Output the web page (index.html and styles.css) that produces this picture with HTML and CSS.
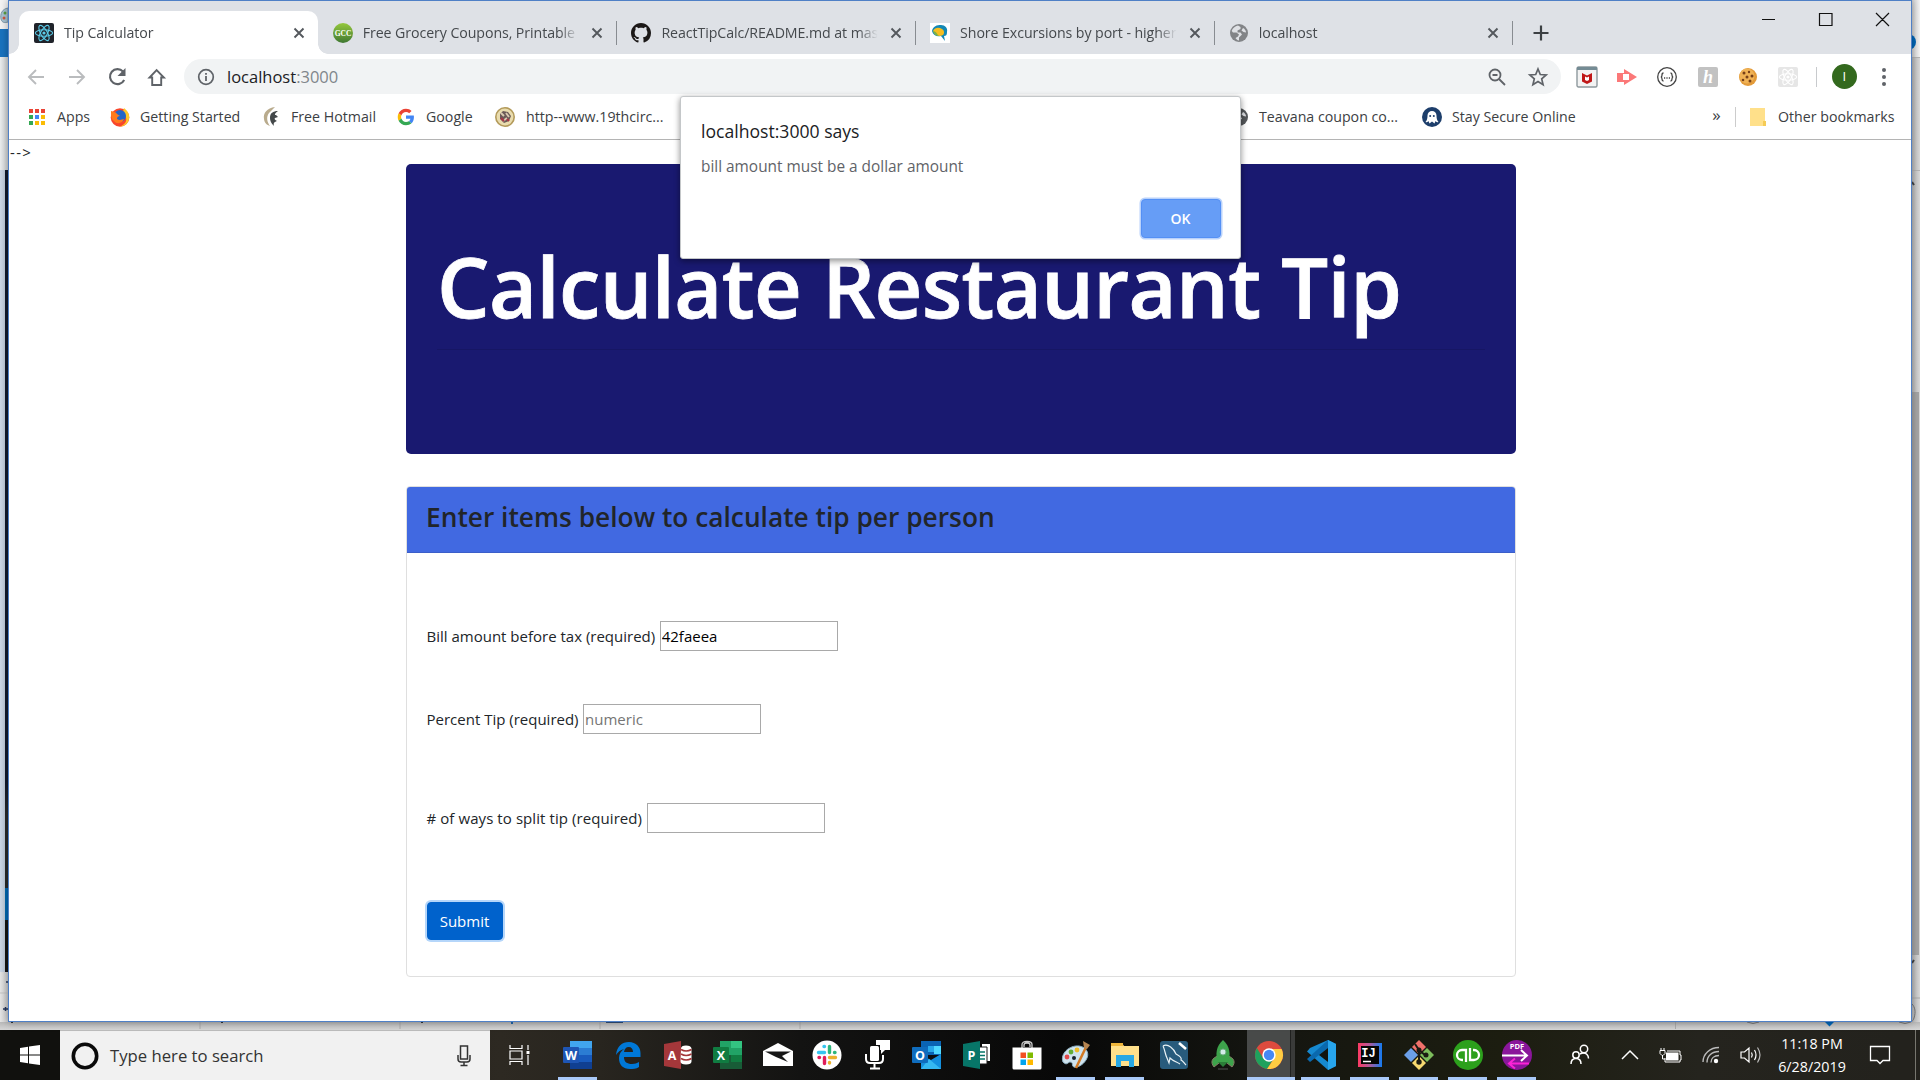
FILE: index.html
```html
<!DOCTYPE html>
<html lang="en">
<head>
<meta charset="utf-8">
<title>Tip Calculator</title>
<link rel="stylesheet" href="styles.css">
</head>
<body>
<svg class="defs" width="0" height="0">
  <symbol id="x" viewBox="0 0 12 12"><path d="M1.500 1.500l9 9M10.500 1.500l-9 9" stroke="#54585d" stroke-width="1.900" fill="none"/></symbol>
  <symbol id="atom" viewBox="0 0 20 20"><g fill="none" stroke="currentColor" stroke-width="1.100"><ellipse cx="10" cy="10" rx="8.600" ry="3.300"/><ellipse cx="10" cy="10" rx="8.600" ry="3.300" transform="rotate(60 10 10)"/><ellipse cx="10" cy="10" rx="8.600" ry="3.300" transform="rotate(120 10 10)"/></g><circle cx="10" cy="10" r="1.600" fill="currentColor"/></symbol>
  <symbol id="globe" viewBox="0 0 20 20"><circle cx="10" cy="10" r="9" fill="currentColor"/><path d="M9 2.500c-3 .6-5.500 2.600-6.300 5.500L4 9.500h3.500l2.500 2-1 2-2.500 1.500c.5 1.200 1.700 2.200 3.500 2.500v-3l3-3-1.500-2H8.500V7.500l3-1.500V4zM14 5l-1.500 2.500 2 1.500 2.500.5C17 7.500 15.800 6 14 5z" fill="#dfe1e5"/></symbol>
</svg>

<div class="desktop">
  <div class="backdrop">
    <div class="edge edge-left">
      <svg class="paint-corner" width="8" height="29" viewBox="0 0 8 29"><path d="M8 8C2 9 0 14 1 19c1 4 4 4 7 3z" fill="#a9c5d4" stroke="#7d97a8"/><circle cx="5" cy="13" r="1.500" fill="#5c9f42"/><circle cx="4" cy="18" r="1.500" fill="#cf5842"/></svg>
      <div class="ribbon"></div>
      <div class="upper"></div>
      <div class="code"><div class="code-dark"></div><div class="code-blue"></div><div class="code-black"></div></div>
      <div class="lower"><svg width="8" height="50" viewBox="0 0 8 50"><path d="M0 21h8" stroke="#c3c3c3"/><path d="M6 10h2M3 37h5M5.500 35v4" stroke="#25365b" stroke-width="1.500"/></svg></div>
    </div>
    <div class="edge edge-right">
      <svg class="user-dot" width="8" height="57" viewBox="0 0 8 57"><circle cx="-4" cy="42" r="8" fill="#0067b8"/></svg>
      <div class="side-top"></div>
      <div class="side-track"><svg width="8" height="20" viewBox="0 0 8 20"><path d="M0 11l2 3" stroke="#444" stroke-width="2"/></svg></div>
      <div class="thumb"></div>
      <svg width="8" height="67" viewBox="0 0 8 67"><path d="M2 5l-2 3" stroke="#444" stroke-width="2"/><path d="M0 43h8" stroke="#aaa"/><path d="M0 49c3 3 4 8 2 14-1 3-2 3-2 3" fill="none" stroke="#777"/></svg>
    </div>
    <svg class="edge-bottom" width="1920" height="8" viewBox="0 0 1920 8"><path d="M200 0v7M400 0v7M600 0v7M800 0v7M1675.500 0v7" stroke="#aaa"/><path d="M606 .5h17" stroke="#304e77"/><path d="M512 0v2" stroke="#2166aa" stroke-width="2"/><path d="M11 .5h2M221 .5h2M421 .5h2" stroke="#333"/><path d="M1747 0q6 3 12 0M1899 0q6 3 12 0" fill="none" stroke="#777"/><path d="M1825 0h9l-2 2-2.500 2.500L1827 2z" fill="#0067b8"/></svg>
  </div>

  <div class="window">
    <div class="tabs">
      <div class="tab active"><svg class="fav" viewBox="0 0 20 20"><rect width="20" height="20" rx="2" fill="#20232a"/><g color="#5bcbe8"><use href="#atom"/></g></svg><span class="label">Tip Calculator</span><svg class="close"><use href="#x"/></svg></div>
      <div class="tab"><svg class="fav" viewBox="0 0 20 20"><defs><linearGradient id="gc" x2="0" y2="1"><stop stop-color="#95c83d"/><stop offset="1" stop-color="#3f7832"/></linearGradient></defs><circle cx="10" cy="10" r="10" fill="url(#gc)"/><text x="10" y="12.800" font-size="7.500" text-anchor="middle" fill="#fff" class="serif">GCC</text></svg><span class="label">Free Grocery Coupons, Printable C</span><svg class="close"><use href="#x"/></svg></div>
      <div class="tab"><svg class="fav" viewBox="0 0 16 16"><path fill="#1b1817" d="M8 0C3.580 0 0 3.580 0 8c0 3.540 2.290 6.530 5.470 7.590.4.070.55-.17.55-.38 0-.19-.01-.82-.01-1.490-2.010.37-2.530-.49-2.690-.94-.09-.23-.48-.94-.82-1.130-.28-.15-.68-.52-.01-.53.63-.01 1.080.58 1.230.82.72 1.210 1.870.87 2.330.66.07-.52.28-.87.51-1.070-1.780-.2-3.640-.89-3.640-3.950 0-.87.31-1.590.82-2.150-.08-.2-.36-1.020.08-2.120 0 0 .67-.21 2.200.82.64-.18 1.320-.27 2-.27s1.360.09 2 .27c1.530-1.040 2.200-.82 2.200-.82.44 1.100.16 1.920.08 2.120.51.56.82 1.270.82 2.150 0 3.070-1.870 3.750-3.650 3.950.29.25.54.73.54 1.480 0 1.070-.01 1.930-.01 2.200 0 .21.15.46.55.38A8.010 8.010 0 0016 8c0-4.420-3.580-8-8-8z"/></svg><span class="label">ReactTipCalc/README.md at mast</span><svg class="close"><use href="#x"/></svg></div>
      <div class="tab"><svg class="fav" viewBox="0 0 20 20"><rect width="20" height="20" fill="#fff"/><path d="M2 8c1-5 5-6 9-6s7 3 6 7c0 3-1 4-3 4l1 5-4-5C6 14 3 12 2 8z" fill="#1388b5"/><path d="M3 8c2-4 6-4 9-2 2 1 3 4 1 6-4 2-8 1-10-4z" fill="#f6bd20"/><path d="M3 8c3 0 4 3 6 5-3 0-5-2-6-5z" fill="#7eb343"/></svg><span class="label">Shore Excursions by port - higher</span><svg class="close"><use href="#x"/></svg></div>
      <div class="tab"><svg class="fav grey"><use href="#globe"/></svg><span class="label">localhost</span><svg class="close"><use href="#x"/></svg></div>
      <svg class="new-tab" width="16" height="16" viewBox="0 0 16 16"><path d="M8 .5v15M.5 8h15" stroke="#3c4043" stroke-width="2.200"/></svg>
      <svg class="controls" width="128" height="16" viewBox="0 0 128 16"><g fill="none" stroke="#111" stroke-width="1.200"><path d="M1 8.500h13M58.500 2.500h12.500v12H58.500zM115 2l13 13M128 2l-13 13"/></g></svg>
    </div>

    <div class="toolbar">
      <svg class="nav" width="144" height="24" viewBox="0 0 144 24">
        <g fill="none" stroke-width="1.900"><path d="M23 12H8M15 5l-7 7 7 7" stroke="#babcbe"/><path d="M48 12h15M56 5l7 7-7 7" stroke="#babcbe"/><path d="M102 6.500A7.500 7.500 0 1 0 103.200 15" stroke="#5f6368" stroke-width="2.100"/><path d="M128.500 12.500h2.700v7.500h9v-7.500h2.700L135.600 5z" stroke="#5f6368"/></g><path d="M104.500 3v8h-8z" fill="#5f6368"/>
      </svg>
      <div class="omnibox">
        <svg width="18" height="18" viewBox="0 0 18 18"><circle cx="9" cy="9" r="7.300" fill="none" stroke="#5f6368" stroke-width="1.700"/><path d="M9 8v5M9 5v1.800" stroke="#5f6368" stroke-width="1.800"/></svg>
        <span class="url">localhost<i>:3000</i></span>
        <svg class="zoomer" width="18" height="18" viewBox="0 0 18 18"><circle cx="7" cy="7" r="5.500" fill="none" stroke="#5f6368" stroke-width="1.800"/><path d="M11 11l6 6M4.500 7h5" stroke="#5f6368" stroke-width="1.800"/></svg>
        <svg width="20" height="20" viewBox="0 0 20 20"><path d="M10 2l2.300 5.500 5.900.5-4.500 3.900 1.400 5.800-5.100-3.100-5.100 3.100 1.400-5.800L1.800 8l5.900-.5z" fill="none" stroke="#5f6368" stroke-width="1.700"/></svg>
      </div>
      <div class="extensions">
        <svg width="22" height="22" viewBox="0 0 22 22"><rect x="1" y="1" width="20" height="20" rx="1.500" fill="#f3f3f3" stroke="#8e999d" stroke-width="1.400"/><path d="M1 1h20v3H1z" fill="#748b94"/><path d="M6 7l5 2.500L16 7v8.500L11 18l-5-2.500z" fill="#c01818"/><path d="M9 10.500l2 1 2-1V14l-2 1-2-1z" fill="#fff"/></svg>
        <svg width="22" height="22" viewBox="0 0 22 22"><path d="M8 3l13 8-13 8z" fill="#fb7878"/><path d="M1 7h11v9H1z" fill="#fb7878"/><path d="M7 8h6v6H7z" fill="#fff"/></svg>
        <svg width="22" height="22" viewBox="0 0 22 22"><circle cx="11" cy="11" r="9.300" fill="#fff" stroke="#444" stroke-width="1.300"/><path d="M7.500 7Q6 7 6 9t-1.200 2Q6 11 6 13t1.500 2M14.500 7q1.500 0 1.500 2t1.200 2Q16 11 16 13t-1.500 2M8 12h1.200M10.400 12h1.200M12.800 12H14" stroke="#444" stroke-width="1.300" fill="none"/></svg>
        <svg width="22" height="22" viewBox="0 0 22 22"><rect x="1" y="1" width="20" height="20" rx="2" fill="#c2c2c2"/><text x="11" y="17" class="hand" text-anchor="middle" font-size="18" fill="#fff">h</text></svg>
        <svg width="22" height="22" viewBox="0 0 22 22"><circle cx="11" cy="11" r="9" fill="#e39b3a"/><circle cx="10" cy="10" r="7.500" fill="#f0b255"/><g fill="#774019"><circle cx="7" cy="7" r="1.500"/><circle cx="12" cy="6" r="1.200"/><circle cx="15" cy="10" r="1.500"/><circle cx="10" cy="11" r="1.500"/><circle cx="6" cy="14" r="1.300"/><circle cx="13" cy="15" r="1.500"/></g></svg>
        <svg width="22" height="22" viewBox="0 0 22 22"><rect x="1" y="1" width="20" height="20" rx="2" fill="#e6e6e6"/><g color="#fff" transform="translate(1 1)"><use href="#atom" width="20" height="20"/></g></svg>
      </div>
      <span class="rule"></span>
      <span class="avatar">I</span>
      <svg class="menu" width="6" height="20" viewBox="0 0 6 20"><g fill="#5f6368"><circle cx="3" cy="3" r="2"/><circle cx="3" cy="10" r="2"/><circle cx="3" cy="17" r="2"/></g></svg>
    </div>

    <div class="bookmarks">
      <div class="mark"><svg viewBox="0 0 20 20"><path d="M2 2h4v4H2z M8 2h4v4H8z M14 2h4v4h-4z" fill="#ea4335"/><path d="M2 8h4v4H2zM2 14h4v4H2z" fill="#34a853"/><path d="M8 8h4v4H8z" fill="#4285f4"/><path d="M14 8h4v4h-4zM8 14h4v4H8zM14 14h4v4h-4z" fill="#fbbc05"/></svg><span>Apps</span></div>
      <div class="mark"><svg viewBox="0 0 20 20"><circle cx="10" cy="10.500" r="9.300" fill="#f9462b"/><path d="M14 1c4 3 6 7 5 11-1 5-5 7.500-9 7.500 5-2 7-5 6-9-1-3-4-4-2-9.500z" fill="#ffc928"/><circle cx="10" cy="9" r="6" fill="#2366c8"/><path d="M1 4c3 1 5 1 6 3l3 2c-2 0-3 1-3 3 3 2 5 0 7 0-1 4-7 6-10 2C1 12 1 8 1 4z" fill="#ff7b1c"/></svg><span>Getting Started</span></div>
      <div class="mark"><svg viewBox="0 0 20 20"><path d="M14 0C6 1 2 6 3 12c.5 4 3 6 6 7-3-4-4-9-1-13 2-2 4-4 6-6z" fill="#b9ab8d"/><path d="M17 4c-5 0-8 2-8 7 0 3 1 5 4 8-1-4 1-4 3-5-2-1-3-2-2-3l3-1-2-2c-2 0-1-2 2-4z" fill="#44484a"/></svg><span>Free Hotmail</span></div>
      <div class="mark"><svg viewBox="-5 -5 58 58"><path fill="#EA4335" d="M24 9.500c3.540 0 6.710 1.220 9.210 3.600l6.850-6.850C35.900 2.380 30.470 0 24 0 14.620 0 6.510 5.380 2.560 13.220l7.980 6.190C12.430 13.720 17.740 9.500 24 9.500z"/><path fill="#4285F4" d="M46.980 24.550c0-1.570-.15-3.090-.38-4.550H24v9.020h12.940c-.58 2.960-2.260 5.480-4.780 7.180l7.730 6c4.510-4.180 7.090-10.360 7.090-17.650z"/><path fill="#FBBC05" d="M10.530 28.590c-.48-1.450-.76-2.990-.76-4.590s.27-3.140.76-4.590l-7.980-6.190C.92 16.460 0 20.120 0 24c0 3.880.92 7.540 2.560 10.780l7.970-6.190z"/><path fill="#34A853" d="M24 48c6.480 0 11.930-2.130 15.890-5.810l-7.730-6c-2.150 1.450-4.920 2.300-8.160 2.300-6.260 0-11.570-4.220-13.470-9.910l-7.980 6.190C6.510 42.620 14.620 48 24 48z"/></svg><span>Google</span></div>
      <div class="mark"><svg viewBox="0 0 20 20"><circle cx="10" cy="10" r="9.200" fill="#e9dcae" stroke="#b39a5a" stroke-width="1.600"/><path d="M5 7l3-3 5 1 3 4-2 5-5 2-4-4z" fill="#6b5a58"/><path d="M6 6l3 3M11 6l3 4M8 14l4-3" stroke="#d8c9b0" stroke-width="2"/><path d="M6 11l3 3M12 12l2 2" stroke="#a83545" stroke-width="2"/></svg><span>http--www.19thcirc...</span></div>
      <div class="mark"><svg class="dark"><use href="#globe"/></svg><span>Teavana coupon co...</span></div>
      <div class="mark"><svg viewBox="0 0 20 20"><circle cx="10" cy="10" r="10" fill="#1d3e6b"/><path d="M5.500 8.500a4.500 4.500 0 0 1 9 0c0 3 .5 5 2 6.500-1.500.5-2.500 0-3-1l-1 2.500-2.500-2-2.500 2-1-2.500c-.5 1-1.500 1.500-3 1 1.500-1.500 2-3.500 2-6.500z" fill="#fff"/><circle cx="8.200" cy="9" r="1" fill="#1d3e6b"/><circle cx="11.800" cy="9" r="1" fill="#1d3e6b"/></svg><span>Stay Secure Online</span></div>
      <span class="more">»</span><span class="rule"></span>
      <div class="mark folder"><svg viewBox="0 0 20 20"><path d="M2 1h15v14h1v4H2z" fill="#ffe08a"/><path d="M15 14h3v5h-3z" fill="#f5cb55"/></svg><span>Other bookmarks</span></div>
    </div>

    <div class="page">
      <div class="stray">--&gt;</div>
      <div class="container">
        <div class="jumbotron"><h1>Calculate Restaurant Tip</h1><hr></div>
        <div class="card">
          <h3 class="card-header">Enter items below to calculate tip per person</h3>
          <form class="card-body">
            <label class="row"><span>Bill amount before tax (required)</span><input type="text" value="42faeea"></label>
            <label class="row"><span>Percent Tip (required)</span><input type="text" placeholder="numeric"></label>
            <label class="row split"><span># of ways to split tip (required)</span><input type="text"></label>
            <button type="button" class="submit">Submit</button>
          </form>
        </div>
      </div>
    </div>

    <div class="dialog">
      <div class="dialog-title">localhost:3000 says</div>
      <div class="dialog-text">bill amount must be a dollar amount</div>
      <button type="button" class="ok">OK</button>
    </div>
  </div>

  <div class="taskbar">
    <div class="start"><svg width="20" height="20" viewBox="0 0 20 20"><path d="M0 3l8-1.200v7.700H0zM9 1.600L20 0v9.500H9zM0 10.500h8v7.700L0 17zM9 10.500h11V20L9 18.400z" fill="#fff"/></svg></div>
    <div class="search"><svg width="28" height="28" viewBox="0 0 28 28"><circle cx="14" cy="14" r="11.700" fill="none" stroke="#0a0a0a" stroke-width="3.600"/></svg><span>Type here to search</span><svg width="14" height="22" viewBox="0 0 14 22"><g fill="none" stroke="#333" stroke-width="1.500"><rect x="3.500" y="1" width="7" height="13"/><path d="M1 10v4q0 3 3 3h6q3 0 3-3v-4M7 17v3M3.500 20.500h7"/></g></svg></div>
    <div class="cell view"><svg width="22" height="20" viewBox="0 0 22 20"><g fill="none" stroke="#fff" stroke-width="1.200"><path d="M1 0v3.500h12V0M1 20v-3.500h12V20M1 6h12v8H1zM19 0v5M19 10v10"/></g><path d="M17.500 6h3v3h-3z" fill="#fff"/></svg></div>
    <div class="cell wide on"><svg viewBox="0 0 30 30"><path d="M7 1h22v7H7z" fill="#41a5ee"/><path d="M7 8h22v7H7z" fill="#2b7cd3"/><path d="M7 15h22v7H7z" fill="#185abd"/><path d="M7 22h22v7H7z" fill="#103f91"/><rect x="0" y="7" width="16" height="16" rx="1" fill="#1e55b3"/><text x="8" y="19.500">W</text></svg></div>
    <div class="cell wide"><svg viewBox="0 0 30 30"><path d="M3 15C4 6 9 2 16 2c7 0 11.500 5 11.500 11v4H11c0 5 3 7 8 7 3 0 5-1 7-2v5c-3 2-6 2-9 2-7 0-11-4-11-11 0-4 2-7 5-9-4 1-6 3-8 6zm8-3h9c0-3-1.500-5-4.300-5S11.500 9 11 12z" fill="#0078d7"/></svg></div>
    <div class="cell wide"><svg viewBox="0 0 30 30"><path d="M1 4l17-3v28L1 26z" fill="#a4373a"/><path d="M18 8.500q0-3 5-3t5.500 3v13q0 3-5.500 3t-5.500-3z" fill="#fff"/><path d="M18 9.500q5 3 10.500 0M18 14q5 3 10.500 0M18 18.500q5 3 10.500 0" fill="none" stroke="#a4373a" stroke-width="1.500"/><text x="9" y="20">A</text></svg></div>
    <div class="cell wide"><svg viewBox="0 0 30 30"><path d="M7 1h11v14H7z" fill="#21a366"/><path d="M18 1h11v7H18z" fill="#33c481"/><path d="M18 8h11v7H18z" fill="#21a366"/><path d="M7 15h22v14H7z" fill="#185c37"/><path d="M18 15h11v7H18z" fill="#107c41"/><rect y="7" width="16" height="16" rx="1" fill="#107c41"/><text x="8" y="19.500">X</text></svg></div>
    <div class="cell wide"><svg viewBox="0 0 30 30"><path d="M0 11L15 3l15 8v15H0z" fill="#fff"/><path d="M2 11.500h26L19 16l6 6-12-5z" fill="#161616"/></svg></div>
    <div class="cell wide"><svg viewBox="0 0 30 30"><circle cx="15" cy="15" r="14.500" fill="#fff"/><g stroke-width="3.400" stroke-linecap="round" fill="none"><path d="M12.500 6.500h-.5M6.500 12.500h6" stroke="#36c5f0"/><path d="M17.500 6.500v6M23 12.500h-.5" stroke="#2eb67d"/><path d="M17.500 17.500h6M17.500 23v-.5" stroke="#ecb22e"/><path d="M12.500 17.500v6M7 17.500h.5" stroke="#e01e5a"/></g></svg></div>
    <div class="cell wide"><svg viewBox="0 0 30 30"><rect x="8" y="6" width="9" height="15" rx="1.500" fill="#fff"/><path d="M4 14v5q0 4 4 4h9q4 0 4-4v-4M12.500 23v5M8 28.500h10" stroke="#fff" stroke-width="2" fill="none"/><path d="M14 0h14v10h-5l-4 4v-4h-1V5h-4z" fill="#fff"/></svg></div>
    <div class="cell wide"><svg viewBox="0 0 30 30"><path d="M9 1h20v14H9z" fill="#0a64b4"/><path d="M16 6h7v6h-7z" fill="#28a8ea"/><path d="M22 6h7v8h-7z" fill="#50d9ff"/><path d="M9 15l10 5 10-6v15H9z" fill="#1490df"/><path d="M17 19l12 10H9z" fill="#35b8f1"/><rect y="7" width="16" height="16" rx="1" fill="#0f6cbd"/><text x="8" y="19.500">O</text></svg></div>
    <div class="cell wide"><svg viewBox="0 0 30 30"><path d="M20 4h8v17h-8z" fill="#fff"/><path d="M17 7h8v17h-8z" fill="#fff" stroke="#161616"/><path d="M18 12h5M18 15.500h5M18 19h5" stroke="#077568" stroke-width="1.500"/><path d="M1 4l17-3v28L1 26z" fill="#077568"/><text x="9.500" y="20">P</text></svg></div>
    <div class="cell"><svg viewBox="0 0 30 30"><path d="M10 8V4.500q0-3 5-3t5 3V8M12 7V5q0-2 3-2t3 2v2" fill="none" stroke="#ccc" stroke-width="1.300"/><path d="M.5 7.500h29V28q0 1.500-1.500 1.500H2Q.5 29.500.5 28z" fill="#fff"/><path d="M8.500 12.500h5.500V18H8.500z" fill="#f25022"/><path d="M15.500 12.500H21V18h-5.500z" fill="#7fba00"/><path d="M8.500 19.500h5.500V25H8.500z" fill="#00a4ef"/><path d="M15.500 19.500H21V25h-5.500z" fill="#ffb900"/></svg></div>
    <div class="cell on"><svg viewBox="0 0 30 30"><path d="M2 22C-1 14 8 5 18 6c8 1 11 8 7 14-3 5-9 8-12 7-3-1 0-5-4-5-2 0-3 4-7 0z" fill="#cfe3ee" stroke="#8eb2c5"/><circle cx="6" cy="17" r="2.400" fill="#e34c4c"/><circle cx="10" cy="12" r="2.400" fill="#62ad38"/><circle cx="16" cy="10" r="2.400" fill="#efbc2a"/><circle cx="13" cy="18" r="2" fill="#17222b"/><path d="M26 5L15 28" stroke="#d27924" stroke-width="2.500"/><path d="M22 1l7 4-3 4-3-1z" fill="#b58451"/></svg></div>
    <div class="cell on"><svg viewBox="0 0 30 30"><path d="M1 3h11l2 3h15v20H1z" fill="#ffe08b"/><path d="M1 3h12v3H1z" fill="#eeb63c"/><path d="M6 15h18v12h-5v-6h-8v6H6z" fill="#28a8e4"/></svg></div>
    <div class="cell"><svg viewBox="0 0 30 30"><rect x="1" y="1" width="28" height="28" rx="3" fill="#285b7c"/><path d="M4 6c5-3 11 3 13 8 4 2 6 4 5 6 2 1 3 3 5 5M4 6c2 4 2 8 4 12l2 5 1-5c3 3 7 4 10 6" fill="none" stroke="#e9f2f6" stroke-width="1.200"/><path d="M20 3l7 6" stroke="#fff" stroke-width="2.500"/></svg></div>
    <div class="cell"><svg viewBox="0 0 30 30"><path d="M10 16c-6 2-8 6-4 11l5-4M20 16c6 2 8 6 4 11l-5-4" fill="#3da34b" stroke="#857b64"/><path d="M15 0c7 6 8 15 5 22H10C7 15 8 6 15 0z" fill="#3da34b"/><path d="M10 22l5 5 5-5z" fill="#2b7d38"/><circle cx="15" cy="12" r="3" fill="#d4ece9" stroke="#6fae83"/><path d="M10 29h10" stroke="#555"/></svg></div>
    <div class="cell chrome"><svg viewBox="0 0 30 30"><circle cx="15" cy="15" r="14" fill="#dd4b3e"/><path d="M2.900 8A14 14 0 0 0 13 28.900L20 18H9z" fill="#1fa15d"/><path d="M15 9h12.600A14 14 0 0 1 13 28.900L20.500 18z" fill="#ffcd42"/><circle cx="15" cy="15" r="6.700" fill="#fff"/><circle cx="15" cy="15" r="5.200" fill="#4688f4"/></svg></div>
    <div class="cell on"><svg viewBox="0 0 30 30"><path d="M22 0l8 4v22l-8 4L1 11.500 4 8z" fill="#1689d0"/><path d="M1 19l3 3L22 8V0z" fill="#0a69ae"/><path d="M22 8v14l-9-7z" fill="#11140f"/><path d="M22 0l8 4v22l-8 4z" fill="#27a5ed"/></svg></div>
    <div class="cell on"><svg viewBox="0 0 30 30"><defs><linearGradient id="ij"><stop stop-color="#fd3a63"/><stop offset=".45" stop-color="#b75797"/><stop offset="1" stop-color="#147bef"/></linearGradient></defs><path d="M3 3h24v24H3z" fill="url(#ij)"/><path d="M6 6h18v18H6z" fill="#050505"/><text x="13.500" y="16.500" class="mono">IJ</text><path d="M8 21.500h8" stroke="#fff" stroke-width="1.500"/></svg></div>
    <div class="cell on"><svg viewBox="0 0 30 30"><path d="M15 0l7 7-7 7-7-7z" fill="#f1716b"/><path d="M7 8l7 7-7 7-7-7z" fill="#6b9fe8"/><path d="M23 8l7 7-7 7-7-7z" fill="#7dbd5c"/><path d="M15 16l7 7-7 7-7-7z" fill="#f6d970"/><path d="M11 4l4 6v13M15 10l7 6" stroke="#1b1b13" stroke-width="2" fill="none"/><g fill="#1b1b13"><circle cx="15" cy="10" r="2.500"/><circle cx="15" cy="22" r="2.700"/><circle cx="22" cy="15" r="2.500"/></g></svg></div>
    <div class="cell on"><svg viewBox="0 0 30 30"><circle cx="15" cy="15" r="15" fill="#2ca01c"/><g fill="none" stroke="#fff" stroke-width="2.300"><path d="M13 22V10H9a5 5 0 0 0 0 10h1M17 8v12h4a5 5 0 0 0 0-10h-1"/></g></svg></div>
    <div class="cell on"><svg viewBox="0 0 30 30"><circle cx="15" cy="15" r="15" fill="#8a169b"/><text x="15" y="9" class="pdf">PDF</text><path d="M0 15.500h24M19 10l6 5.500-6 5.500" stroke="#fff" stroke-width="2" fill="none"/><path d="M27 23.500H8M13 18.500l-6 5 6 5" stroke="#fb22d6" stroke-width="2" fill="none"/></svg></div>
    <div class="tray">
      <svg width="20" height="22" viewBox="0 0 20 22"><g fill="none" stroke="#fff" stroke-width="1.500"><circle cx="14" cy="5" r="3.700"/><circle cx="6" cy="11" r="3.200"/><path d="M1 20q0-5.500 5-5.500t5 5.500M10 10q4-2.500 7 .5 1.500 1.500 1.500 4"/></g></svg>
      <svg width="18" height="10" viewBox="0 0 18 10"><path d="M1 9l8-8 8 8" fill="none" stroke="#fff" stroke-width="1.500"/></svg>
      <svg width="22" height="16" viewBox="0 0 22 16"><path d="M7 5.500h12.500v8H7z" fill="#fff"/><path d="M6 11v4h15v-2h1v-5h-1V4H8" fill="none" stroke="#fff"/><path d="M1 3.500h5v3l-2 2H3l-2-2zM2 1v2M5 1v2M3.500 8v4H6" stroke="#fff" fill="none"/></svg>
      <svg width="18" height="18" viewBox="0 0 18 18"><g fill="none" stroke="#bbb" stroke-width="1.400"><path d="M1 16C1 8 8 1.500 17 1.500M5 16.500C5 10 10 5.500 17 5.500M9 16.500c0-4 3-7 8-7"/></g><circle cx="14" cy="15" r="2.200" fill="#fff"/></svg>
      <svg width="22" height="18" viewBox="0 0 22 18"><g fill="none" stroke="#fff" stroke-width="1.200"><path d="M1 6h3.500L9 2v14l-4.500-4H1zM11.500 6.500q1.500 2.500 0 5M14.500 4q3 5 0 10"/><path d="M17.500 1.500q5 7.500 0 15" stroke="#bbb"/></g></svg>
      <div class="clock"><span>11:18 PM</span><span>6/28/2019</span></div>
      <svg width="22" height="20" viewBox="0 0 22 20"><path d="M1.500 1.500h19v14H14l-3 3-3-3H1.500z" fill="none" stroke="#fff" stroke-width="1.300"/></svg>
      <span class="peek"></span>
    </div>
  </div>
</div>
</body>
</html>
```
FILE: styles.css
```css
* { box-sizing: border-box; }
body { margin: 0; font-family: "Open Sans", "Noto Sans", sans-serif; font-size: 15px; color: #212529; }
svg { display: block; flex: none; overflow: visible; }
.defs { position: absolute; }
.serif { font-family: "Liberation Serif", serif; font-weight: 700; }
.hand { font-family: "Liberation Serif", serif; font-style: italic; font-weight: 700; }

.desktop { position: relative; width: 1920px; height: 1080px; overflow: hidden; display: grid; grid-template-rows: 1030px 50px; }

.backdrop { display: grid; grid-template: 1022px 8px / 8px 1fr 8px; background: #cdcdcd; }
.edge { display: flex; flex-direction: column; }
.edge-left { background: #dde2e8; }
.edge-bottom { grid-column: 1 / -1; background: linear-gradient(#b9b9b9, #d6d6d6); }
.edge-right { grid-column: 3; background: linear-gradient(90deg, #b9b9b9, #dadada); }
.paint-corner { background: #f4f4f4; }
.ribbon { height: 28px; background: #1a73bf; }
.upper { height: 113px; background: linear-gradient(90deg, #eceeef, #cfd2d4); }
.code { height: 802px; padding-left: 5px; background: linear-gradient(90deg, #ccd7e6, #b8c4d4); }
.code-dark { height: 718px; background: linear-gradient(#10182c, #10182c 85%, #2a2a2a 90%); }
.code-blue { height: 32px; background: #0067b1; }
.code-black { height: 52px; background: #141414; }
.lower { height: 50px; background: linear-gradient(90deg, #e6e6e6, #cbcbcb); }
.user-dot { background: linear-gradient(90deg, #d2d2d2, #f4f4f4); }
.side-top { height: 114px; border: solid #b5b5b5; border-width: 1px 0; }
.side-track { height: 221px; }
.thumb { height: 563px; width: 7px; background: #a6a6a6; }

.window { position: absolute; left: 8px; top: 0; width: 1904px; height: 1022px; background: #fff; border: 1px solid #4f80c6; box-shadow: 0 0 8px rgba(0,0,0,.35); }

.tabs { display: flex; height: 53px; padding: 10px 0 0 10px; background: #dee1e6; font-size: 14.200px; color: #45494d; }
.tab { position: relative; display: flex; flex: none; align-items: center; gap: 10px; width: 298.700px; height: 43px; padding: 0 13px 0 15px; }
.tab:not(.active)::after { content: ""; position: absolute; right: -1px; top: 10px; width: 1px; height: 24px; background: #888c91; }
.tab.active { background: #fff; border-radius: 10px 10px 0 0; }
.tab.active::before, .tab.active::after { content: ""; position: absolute; bottom: 0; width: 10px; height: 10px; }
.tab.active::before { left: -10px; background: radial-gradient(circle at 0 0, transparent 9.500px, #fff 10px); }
.tab.active::after { right: -10px; background: radial-gradient(circle at 100% 0, transparent 9.500px, #fff 10px); }
.fav { width: 20px; height: 20px; }
.grey { color: #828487; }
.dark { color: #55585b; }
.label { flex: 1; width: 0; white-space: nowrap; overflow: hidden; line-height: 20px; letter-spacing: -.08px; mask-image: linear-gradient(90deg, #000 90%, transparent 99%); }
.close { width: 12px; height: 12px; }
.new-tab { margin: 14px 0 0 21px; }
.controls { margin: 0 22px 0 auto; }

.toolbar { display: flex; align-items: center; height: 40px; padding-top: 5px; }
.nav { margin-left: 12px; margin-right: 19px; }
.omnibox { display: flex; align-items: center; width: 1377px; height: 35px; border-radius: 18px; background: #f1f3f4; padding: 0 13px; }
.url { font-size: 16.500px; line-height: 24px; color: #202124; margin-left: 12px; }
.url i { font-style: normal; color: #80868b; }
.zoomer { margin: 0 22px 0 auto; }
.extensions { display: flex; gap: 18.200px; margin-left: 15px; }
.toolbar .rule { width: 1px; height: 20px; background: #c8cacd; margin: 0 15px 0 17px; }
.avatar { width: 25px; height: 25px; border-radius: 50%; background: #33691e; color: #fff; font-size: 13px; line-height: 25px; text-align: center; }
.menu { margin-left: 24px; }

.bookmarks { display: grid; grid-template-columns: 83px 151px 135px 99px 734px 193px 281px 32px 13px 1fr; align-items: center; height: 46px; padding-left: 18px; border-bottom: 1px solid #b4b4b4; font-size: 14.200px; color: #3c4043; }
.mark { display: flex; gap: 10px; align-items: center; white-space: nowrap; line-height: 20px; }
.mark:nth-child(5) { gap: 11px; }
.mark svg { width: 20px; height: 20px; }
.more { text-align: center; font-size: 17px; line-height: 20px; padding-bottom: 3px; margin-left: -5px; }
.bookmarks .rule { width: 1px; height: 20px; background: #ccc; }

.stray { height: 24px; line-height: 24px; font-size: 15px; letter-spacing: 1.300px; padding-left: 1px; }
.container { width: 1110px; margin-left: 397px; }
.jumbotron { height: 290px; padding: 64px 31px; border-radius: 5px; background: #191970; color: #fff; }
.jumbotron h1 { margin: 0; padding-top: 9px; font-size: 83px; line-height: 97px; font-weight: 600; letter-spacing: -.62px; white-space: nowrap; -webkit-text-stroke: .8px #fff; }
.jumbotron hr { margin: 15px 0 0; border: 0; border-top: 1px solid rgba(0,0,0,.1); }
.card { height: 491px; margin-top: 32px; border: 1px solid #dfdfdf; border-radius: 4px; }
.card-header { height: 66px; margin: 0; padding: 12px 19px; border-radius: 3px 3px 0 0; border-bottom: 1px solid #3b5ec9; background: #4169e1; font-size: 26.300px; line-height: 36px; font-weight: 600; white-space: nowrap; }
.card-body { padding: 68px 20px 0; }
.row { display: flex; align-items: center; gap: 4px; height: 30px; margin-bottom: 53px; line-height: 24px; white-space: nowrap; }
.row span { margin-left: -.5px; margin-right: .5px; }
.row:nth-child(2), .row.split { margin-bottom: 69px; }
.row.split { letter-spacing: .08px; }
.row input { width: 178px; height: 30px; padding: 1px 1px; border: 1px solid #a9a9a9; border-radius: 0; font: 15px "Open Sans", sans-serif; color: #000; background: #fff; }
.row input::placeholder { color: #757575; }
.submit { display: block; width: 76px; height: 38px; padding: 0 1px 0 0; border: 1px solid #0062cc; border-radius: 4px; background: #0062cc; color: #fff; font: 15px/24px "Open Sans", sans-serif; box-shadow: 0 0 0 2px #b5d6fa; }

.dialog { position: absolute; left: 671px; top: 95px; width: 561px; height: 163px; padding: 22px 19px 20px 20px; border: 1px solid #c4c7c9; border-radius: 3px; background: #fff; box-shadow: 0 2px 6px rgba(0,0,0,.45); display: flex; flex-direction: column; }
.dialog-title { font-size: 17.600px; line-height: 24px; color: #202124; }
.dialog-text { margin-top: 13px; font-size: 15.400px; line-height: 22px; color: #5f6368; }
.ok { margin: 21px 0 0 auto; width: 80px; height: 39px; flex: none; padding: 0 1px 0 0; border: 1px solid #5490f5; border-radius: 4px; background: #669df6; color: #fff; font: 600 14px "Open Sans", sans-serif; box-shadow: 0 0 0 1.500px #b9d2fb; }

.taskbar { display: flex; height: 50px; background: linear-gradient(90deg, #11110e 0, #11110e 60px, #2d2922 500px, #28251f 600px, #131312 800px, #080808 1060px, #141510 1260px, #1c1d10 1500px, #25241e 1700px, #23221d 1900px); color: #fff; }
.start { display: flex; width: 60px; align-items: center; justify-content: center; }
.search { display: flex; align-items: center; width: 430px; padding: 0 19px 0 11px; background: #f1f1f1; border-top: 1px solid #bbb; color: #333; font-size: 16.700px; }
.search span { margin-left: 11px; margin-right: auto; line-height: 24px; }
.cell { display: flex; flex: none; width: 49px; height: 50px; align-items: center; justify-content: center; }
.cell.on { background: linear-gradient(#a9c9f8, #a9c9f8) 5px 100% / 39px 3px no-repeat; }
.cell svg { width: 30px; height: 30px; }
.cell text { font: 700 12.500px "Open Sans", sans-serif; fill: #fff; text-anchor: middle; }
.cell .mono { font: 700 12px "Liberation Mono", monospace; }
.cell .pdf { font-size: 7.500px; }
.cell.wide { width: 49.900px; }
.cell.view { width: 63px; justify-content: flex-start; padding-left: 19px; }
.cell.view svg { width: 22px; height: 20px; }
.cell.chrome { width: 48px; margin-right: 1px; padding-right: 5px; background: linear-gradient(#a9c9f8, #a9c9f8) 0 100% / 100% 3px no-repeat, linear-gradient(90deg, #484a49 0 43px, #20211f 43px 44px, #3a3b39 44px); }
.tray { display: flex; align-items: center; margin-left: 29px; width: 350px; }
.tray svg:nth-child(2) { margin-left: 31px; }
.tray svg:nth-child(3) { margin-left: 20px; }
.tray svg:nth-child(4) { margin-left: 21px; }
.tray svg:nth-child(5) { margin-left: 20px; }
.clock { display: flex; flex-direction: column; width: 80px; margin: 0 17px 0 10px; align-items: center; font-size: 14.300px; line-height: 23px; white-space: nowrap; }
.peek { width: 1px; height: 50px; margin-left: 24px; background: #77766f; }
```
